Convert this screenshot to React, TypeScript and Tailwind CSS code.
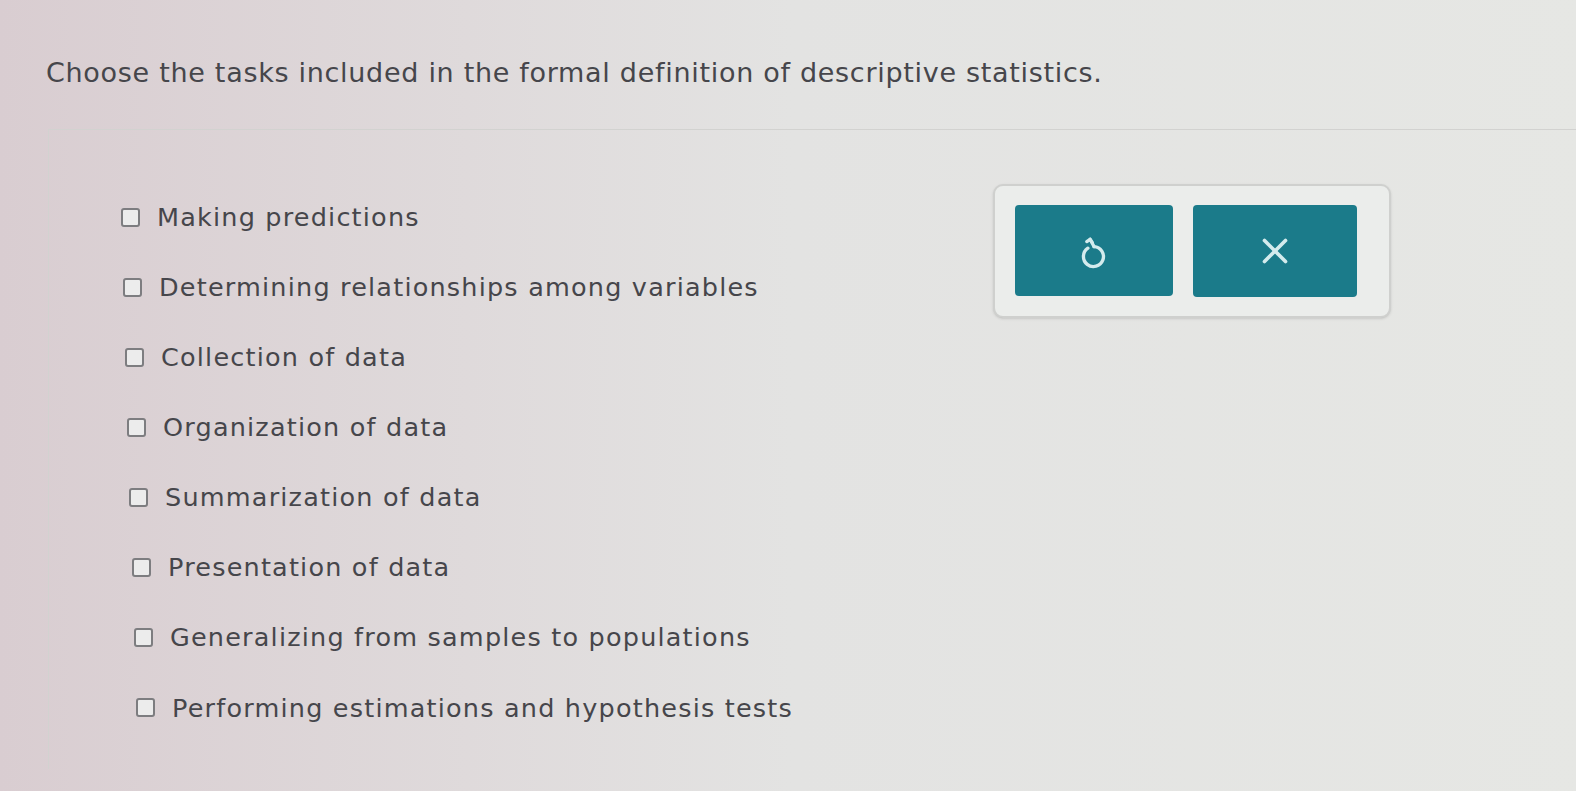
import { X } from "lucide-react";

const options = [
  "Making predictions",
  "Determining relationships among variables",
  "Collection of data",
  "Organization of data",
  "Summarization of data",
  "Presentation of data",
  "Generalizing from samples to populations",
  "Performing estimations and hypothesis tests",
];

// the rows drift slightly right going down, as in the picture
const shifts = ["ml-[0px]", "ml-[2px]", "ml-[4px]", "ml-[6px]", "ml-[8px]", "ml-[11px]", "ml-[13px]", "ml-[15px]"];

function UndoIcon() {
  return (
    <svg width="32" height="40" viewBox="0 0 28 36" fill="none" stroke="#d4ebed" strokeWidth="3" strokeLinecap="round" strokeLinejoin="round">
      <path d="M8.5 15.5 A9 9 0 1 0 14 14" />
      <path d="M14 14 L10.5 7.5" />
      <path d="M7.5 9.5 L10.5 7.5 L12.5 10.5" />
    </svg>
  );
}

export default function App() {
  return (
    <div
      className="h-[791px] w-[1576px] overflow-hidden bg-gradient-to-r from-[#d9cdd1] via-[#e3e3e2] to-[#e6e7e4] text-[#46464b]"
      style={{ fontFamily: '"DejaVu Sans", Verdana, sans-serif' }}
    >
      <h1 className="pl-[46px] pt-[56px] text-[27px] leading-[34px] tracking-[0.7px]">
        Choose the tasks included in the formal definition of descriptive statistics.
      </h1>

      <div className="ml-[48px] mt-[39px] flex h-[640px] border-l border-t border-[#d2d2d0] pl-[72px] pt-[70px]">
        <div className="flex flex-col gap-[36.1px]">
          {options.map((o, i) => (
            <label key={o} className={`flex h-[34px] items-center gap-[17px] text-[25.5px] tracking-[1.2px] ${shifts[i]}`}>
              <span className="h-[19px] w-[19px] shrink-0 rounded-[3px] border-2 border-[#7d7d80] bg-[#ececec]" />
              <span>{o}</span>
            </label>
          ))}
        </div>

        <div className="ml-auto mr-[185px] mt-[-16px] flex h-[134px] w-[398px] items-start gap-[20px] rounded-[10px] border-2 border-[#cfd0ce] bg-[#ebedeb] px-[20px] pt-[19px] shadow-sm">
          <button className="flex h-[91px] w-[158px] items-center justify-center rounded-[4px] bg-[#1b7b8a]">
            <UndoIcon />
          </button>
          <button className="flex h-[92px] w-[164px] items-center justify-center rounded-[4px] bg-[#1b7b8a]">
            <X size={42} color="#d4ebed" strokeWidth={2.1} />
          </button>
        </div>
      </div>
    </div>
  );
}
